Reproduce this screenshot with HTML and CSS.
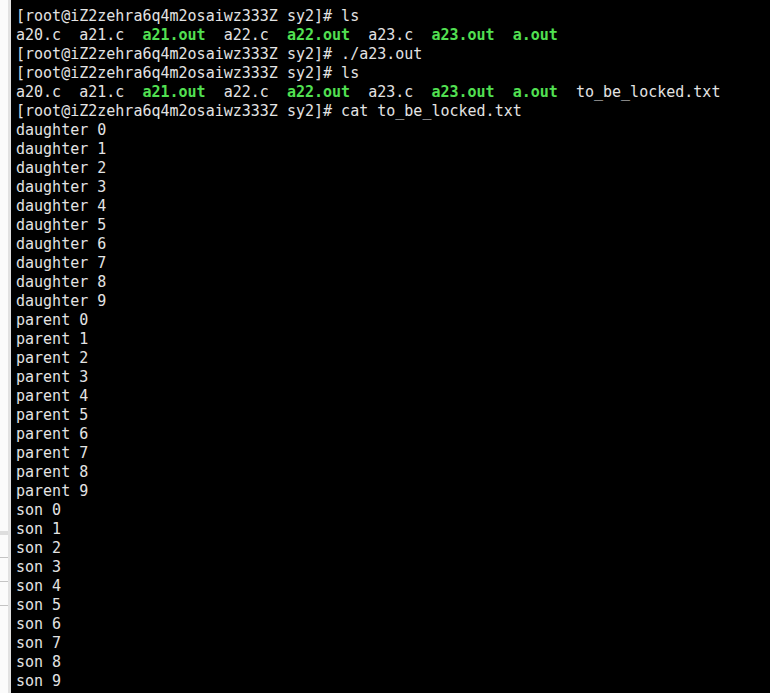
FILE: index.html
```html
<!DOCTYPE html>
<html>
<head>
<meta charset="utf-8">
<link rel="stylesheet" href="styles.css">
</head>
<body>
<div class="app">
  <div class="side">
    <div class="side-band"></div>
    <div class="side-line l1"></div>
    <div class="side-line"></div>
    <div class="side-line"></div>
  </div>
  <div class="term"><pre class="out">[root@iZ2zehra6q4m2osaiwz333Z sy2]# ls
a20.c  a21.c  <b class="g">a21.out</b>  a22.c  <b class="g">a22.out</b>  a23.c  <b class="g">a23.out</b>  <b class="g">a.out</b>
[root@iZ2zehra6q4m2osaiwz333Z sy2]# ./a23.out
[root@iZ2zehra6q4m2osaiwz333Z sy2]# ls
a20.c  a21.c  <b class="g">a21.out</b>  a22.c  <b class="g">a22.out</b>  a23.c  <b class="g">a23.out</b>  <b class="g">a.out</b>  to_be_locked.txt
[root@iZ2zehra6q4m2osaiwz333Z sy2]# cat to_be_locked.txt
daughter 0
daughter 1
daughter 2
daughter 3
daughter 4
daughter 5
daughter 6
daughter 7
daughter 8
daughter 9
parent 0
parent 1
parent 2
parent 3
parent 4
parent 5
parent 6
parent 7
parent 8
parent 9
son 0
son 1
son 2
son 3
son 4
son 5
son 6
son 7
son 8
son 9</pre></div>
</div>
</body>
</html>
```
FILE: styles.css
```css
html, body {
  margin: 0;
  padding: 0;
  background: #000;
  overflow: hidden;
}
.app {
  display: flex;
  width: 770px;
  height: 693px;
}
.side {
  width: 8px;
  flex: none;
  background: #fbfbfb;
  border-right: 3px solid #e2e2e2;
  display: flex;
  flex-direction: column;
}
.side-band {
  margin-top: 531px;
  height: 4px;
  background: #dedede;
}
.side-line {
  margin-top: 23px;
  height: 1px;
  background: #c4c4c4;
}
.side-line.l1 {
  margin-top: 22px;
}
.term {
  flex: 1;
  background: #000;
  padding: 7px 0 0 5px;
}
.out {
  margin: 0;
  font-family: "DejaVu Sans Mono", monospace;
  font-size: 15px;
  line-height: 19px;
  color: #e3e3e3;
}
.g {
  color: #52e052;
  font-weight: bold;
}
```
